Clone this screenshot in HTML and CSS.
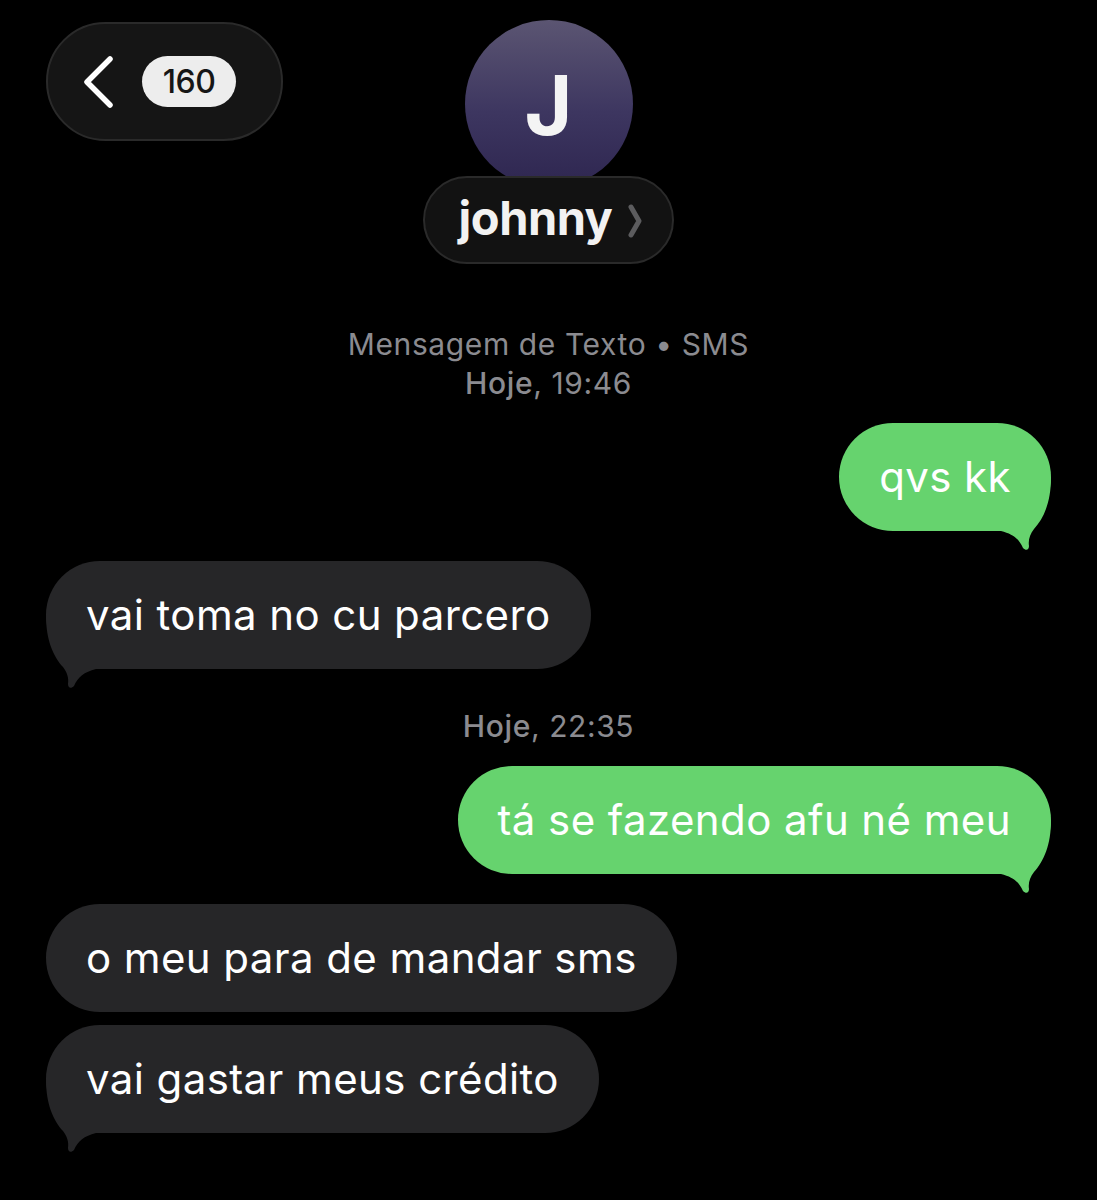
FILE: index.html
```html
<!DOCTYPE html>
<html lang="pt">
<head>
<meta charset="utf-8">
<title>johnny</title>
<link rel="stylesheet" href="styles.css">
</head>
<body>
<div class="screen">
  <header class="nav">
    <div class="nav-left">
      <div class="back">
        <svg class="back-chevron" width="32" height="52" viewBox="0 0 32 52"><path d="M27 3 L4 26 L27 49" fill="none" stroke="#fff" stroke-width="5.5" stroke-linecap="round" stroke-linejoin="round"/></svg>
        <span class="badge">160</span>
      </div>
    </div>
    <div class="contact">
      <div class="avatar">J</div>
      <div class="name-pill">
        <span class="name">johnny</span>
        <svg class="name-chevron" width="14" height="34" viewBox="0 0 14 34"><path d="M3 3 L11 17 L3 31" fill="none" stroke="#5c5c5e" stroke-width="5" stroke-linecap="round" stroke-linejoin="round"/></svg>
      </div>
    </div>
    <div class="nav-right"></div>
  </header>

  <main class="thread">
    <div class="meta first">
      <div>Mensagem de Texto • SMS</div>
      <div><b>Hoje</b>, 19:46</div>
    </div>

    <div class="row out">
      <div class="bubble green">
        <svg class="tail-svg" width="60" height="74" viewBox="0 0 60 74"><path d="M0 0 C0 25 7 41 17 52 C21 57 23 63 22 69 C22 73 25 74 28 71 C32 62 38 57 50 54 L60 54 L60 0 Z"/></svg>
        <span class="text">qvs kk</span>
      </div>
    </div>

    <div class="row in gap-tail">
      <div class="bubble gray">
        <svg class="tail-svg" width="60" height="74" viewBox="0 0 60 74"><path d="M0 0 C0 25 7 41 17 52 C21 57 23 63 22 69 C22 73 25 74 28 71 C32 62 38 57 50 54 L60 54 L60 0 Z"/></svg>
        <span class="text">vai toma no cu parcero</span>
      </div>
    </div>

    <div class="meta mid">
      <div><b>Hoje</b>, 22:35</div>
    </div>

    <div class="row out">
      <div class="bubble green">
        <svg class="tail-svg" width="60" height="74" viewBox="0 0 60 74"><path d="M0 0 C0 25 7 41 17 52 C21 57 23 63 22 69 C22 73 25 74 28 71 C32 62 38 57 50 54 L60 54 L60 0 Z"/></svg>
        <span class="text">tá se fazendo afu né meu</span>
      </div>
    </div>

    <div class="row in gap-tail">
      <div class="bubble gray"><span class="text">o meu para de mandar sms</span></div>
    </div>

    <div class="row in gap-group">
      <div class="bubble gray">
        <svg class="tail-svg" width="60" height="74" viewBox="0 0 60 74"><path d="M0 0 C0 25 7 41 17 52 C21 57 23 63 22 69 C22 73 25 74 28 71 C32 62 38 57 50 54 L60 54 L60 0 Z"/></svg>
        <span class="text">vai gastar meus crédito</span>
      </div>
    </div>
  </main>
</div>
</body>
</html>
```

FILE: styles.css
```css
* { box-sizing: border-box; }

html, body {
  margin: 0;
  padding: 0;
  background: #000;
}

body {
  font-family: Inter, "Noto Sans", "Liberation Sans", sans-serif;
  color: #fff;
  width: 1097px;
  height: 1200px;
  overflow: hidden;
}

.screen {
  padding: 0 46px;
}

/* ---------- header ---------- */
.nav {
  display: grid;
  grid-template-columns: 1fr auto 1fr;
  align-items: start;
}

.nav-left {
  padding-top: 22px;
}

.back {
  width: 237px;
  height: 119px;
  border-radius: 60px;
  background: #151515;
  border: 2px solid #2a2a2a;
  display: flex;
  align-items: center;
  padding-left: 35px;
  gap: 27px;
}

.back-chevron {
  display: block;
}

.badge {
  width: 94px;
  height: 51px;
  border-radius: 26px;
  background: #ededed;
  color: #161616;
  font-size: 32px;
  font-weight: 500;
  letter-spacing: -0.5px;
  display: flex;
  align-items: center;
  justify-content: center;
}

.contact {
  display: flex;
  flex-direction: column;
  align-items: center;
  padding-top: 20px;
}

.avatar {
  width: 168px;
  height: 168px;
  border-radius: 50%;
  background: linear-gradient(180deg, #5b5572 0%, #3d3660 55%, #2e2650 100%);
  display: flex;
  align-items: center;
  justify-content: center;
  font-size: 82px;
  font-weight: 700;
  color: #f4f4f4;
  padding-top: 2px;
}

.name-pill {
  margin-top: -12px;
  height: 88px;
  border-radius: 44px;
  background: #121212;
  border: 2px solid #2a2a2a;
  display: flex;
  align-items: center;
  padding: 0 30px 0 34px;
  gap: 16px;
  position: relative;
}

.name {
  font-size: 47px;
  font-weight: 700;
  color: #f2f2f2;
  letter-spacing: -0.5px;
  line-height: 1;
  padding-bottom: 6px;
}

.name-chevron {
  display: block;
  margin-top: 2px;
}

/* ---------- thread ---------- */
.thread {
  display: flex;
  flex-direction: column;
}

.meta {
  text-align: center;
  color: #8b8b90;
  font-size: 30px;
  line-height: 39px;
  letter-spacing: 0.6px;
}

.meta b {
  font-weight: 500;
}

.meta.first {
  margin-top: 61px;
  margin-bottom: 20px;
}

.meta.mid {
  margin-top: 38px;
  margin-bottom: 20px;
}

.row {
  display: flex;
}

.row.out {
  justify-content: flex-end;
}

.row.in {
  justify-content: flex-start;
}

.gap-tail {
  margin-top: 30px;
}

.gap-group {
  margin-top: 13px;
}

.bubble {
  position: relative;
  height: 108px;
  border-radius: 54px;
  padding: 0 40px;
  font-size: 42px;
  letter-spacing: 0.4px;
  line-height: 108px;
  white-space: nowrap;
}

.bubble .text {
  position: relative;
  z-index: 1;
}

.bubble.green {
  background: #66d36e;
  color: #fff;
}

.bubble.gray {
  background: #262628;
  color: #fff;
}

.tail-svg {
  position: absolute;
  bottom: -20px;
  display: block;
}

.gray .tail-svg {
  left: 0;
  fill: #262628;
}

.green .tail-svg {
  right: 0;
  fill: #66d36e;
  transform: scaleX(-1);
}
```
